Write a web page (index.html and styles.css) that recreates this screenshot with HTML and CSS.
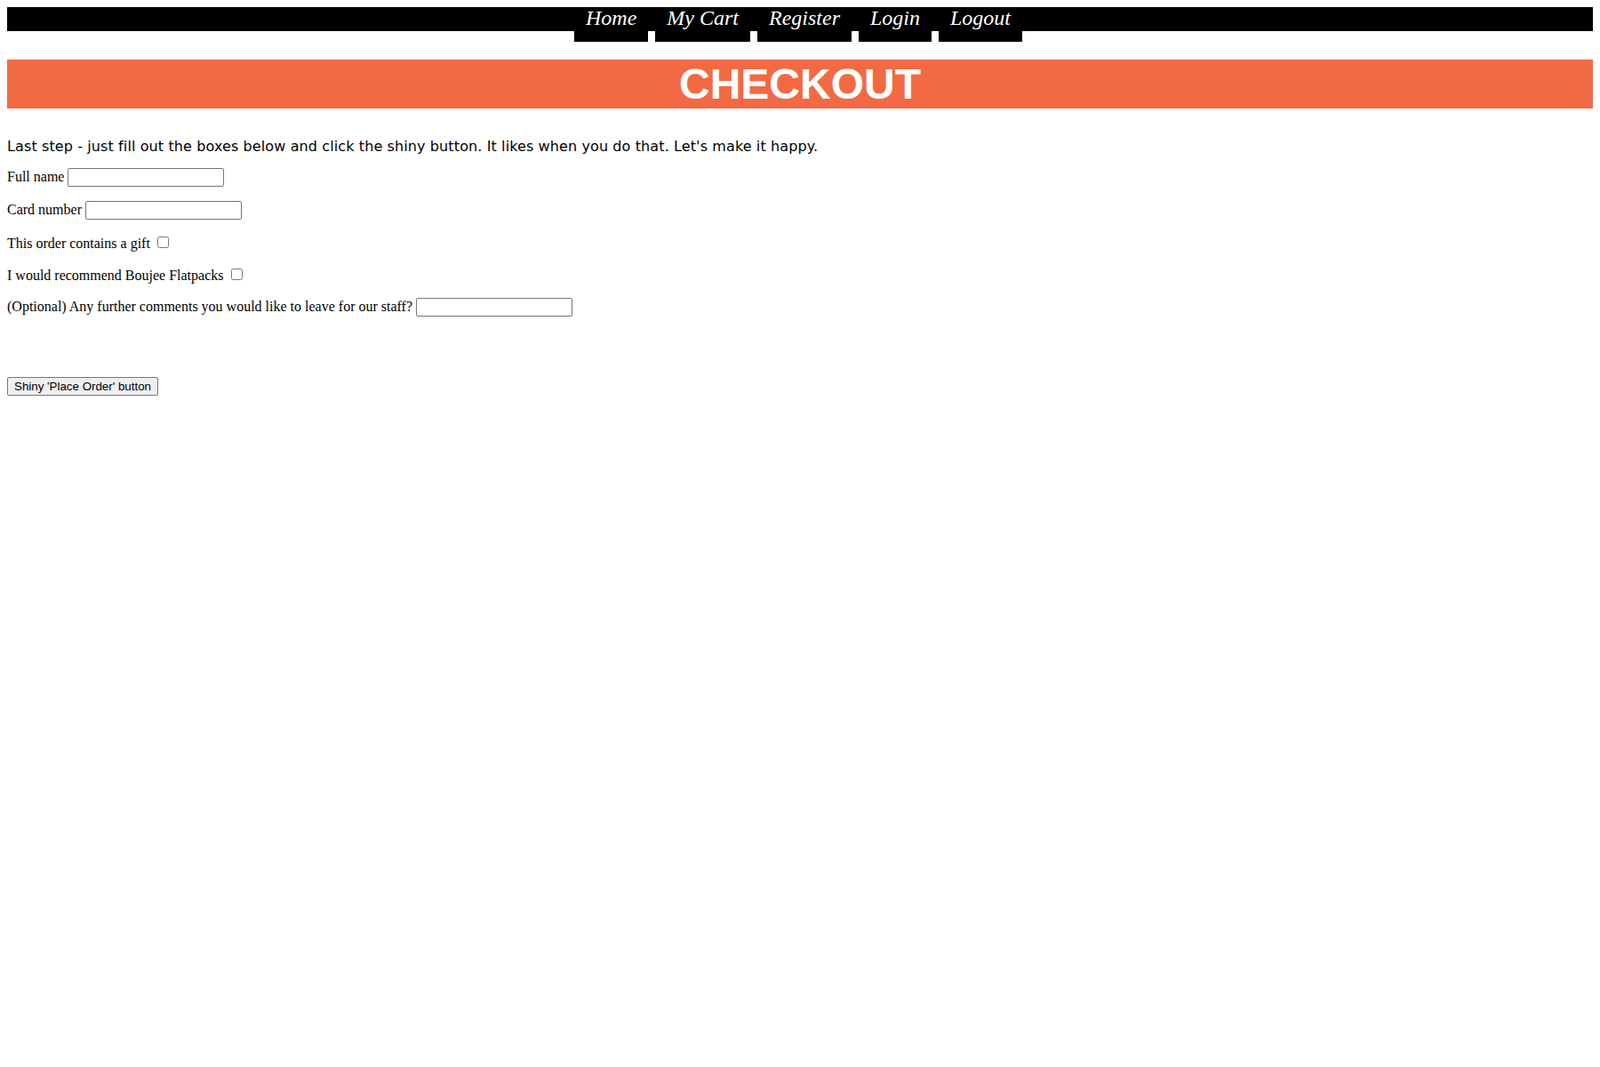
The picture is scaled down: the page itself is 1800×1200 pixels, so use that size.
FILE: index.html
```html
<!DOCTYPE html>
<html lang="en">
<head>
<meta charset="utf-8">
<title>Checkout</title>
<link rel="stylesheet" href="styles.css">
</head>
<body>
<nav class="nav">
  <a class="nav-link" href="#">Home</a>
  <a class="nav-link" href="#">My Cart</a>
  <a class="nav-link" href="#">Register</a>
  <a class="nav-link" href="#">Login</a>
  <a class="nav-link" href="#">Logout</a>
</nav>
<h1 class="banner">CHECKOUT</h1>
<p class="intro">Last step - just fill out the boxes below and click the shiny button. It likes when you do that. Let's make it happy.</p>
<form class="form">
  <p class="row"><label for="fullname">Full name</label> <input class="text" type="text" id="fullname"></p>
  <p class="row"><label for="card">Card number</label> <input class="text" type="text" id="card"></p>
  <p class="row"><label for="gift">This order contains a gift</label> <input class="check" type="checkbox" id="gift"></p>
  <p class="row"><label for="rec">I would recommend Boujee Flatpacks</label> <input class="check" type="checkbox" id="rec"></p>
  <p class="row"><label for="comments">(Optional) Any further comments you would like to leave for our staff?</label> <input class="text" type="text" id="comments"></p>
  <div class="actions"><button class="btn" type="button">Shiny 'Place Order' button</button></div>
</form>
</body>
</html>
```
FILE: styles.css
```css
html, body {
  background: #ffffff;
}
body {
  margin: 8px;
  font-family: "Liberation Serif", "Times New Roman", serif;
  font-size: 16px;
  color: #000000;
}
.nav {
  height: 27px;
  background: #000000;
  display: flex;
  justify-content: center;
  align-items: flex-start;
  gap: 8px;
  padding-right: 4px;
}
.nav-link {
  display: block;
  margin-top: -8px;
  height: 47px;
  box-sizing: border-box;
  padding: 0 13px 7px;
  line-height: 40px;
  background: #000000;
  color: #ffffff;
  font-family: "Liberation Serif", "Times New Roman", serif;
  font-style: italic;
  font-size: 24px;
  text-decoration: none;
  white-space: nowrap;
}
.banner {
  margin: 32px 0;
  height: 55px;
  line-height: 55px;
  background: #f26a43;
  color: #ffffff;
  text-align: center;
  font-family: "Liberation Sans", Arial, sans-serif;
  font-weight: bold;
  font-size: 48px;
}
.intro {
  margin: 16px 0;
  padding-top: 1px;
  height: 18.4px;
  line-height: 19.4px;
  font-family: "DejaVu Sans", Verdana, sans-serif;
  font-size: 16px;
  letter-spacing: 0.11px;
  color: #000000;
}
.form {
  margin: 0;
}
.row {
  margin: 16px 0;
}
.text {
  width: 176px;
  height: 21px;
  box-sizing: border-box;
  padding: 1px 2px;
  border: 1px solid #767676;
  border-radius: 2px;
  background: #ffffff;
  font-family: "Liberation Sans", Arial, sans-serif;
  font-size: 13.333px;
  margin: 0;
}
.check {
  width: 13px;
  height: 13px;
  margin: 3px 3px 3px 4px;
}
.actions {
  margin-top: 68px;
}
.btn {
  height: 21px;
  box-sizing: border-box;
  padding: 1px 7px;
  border: 1px solid #767676;
  border-radius: 2px;
  background: #efefef;
  color: #000000;
  font-family: "Liberation Sans", Arial, sans-serif;
  font-size: 13.333px;
  margin: 0;
}
```
